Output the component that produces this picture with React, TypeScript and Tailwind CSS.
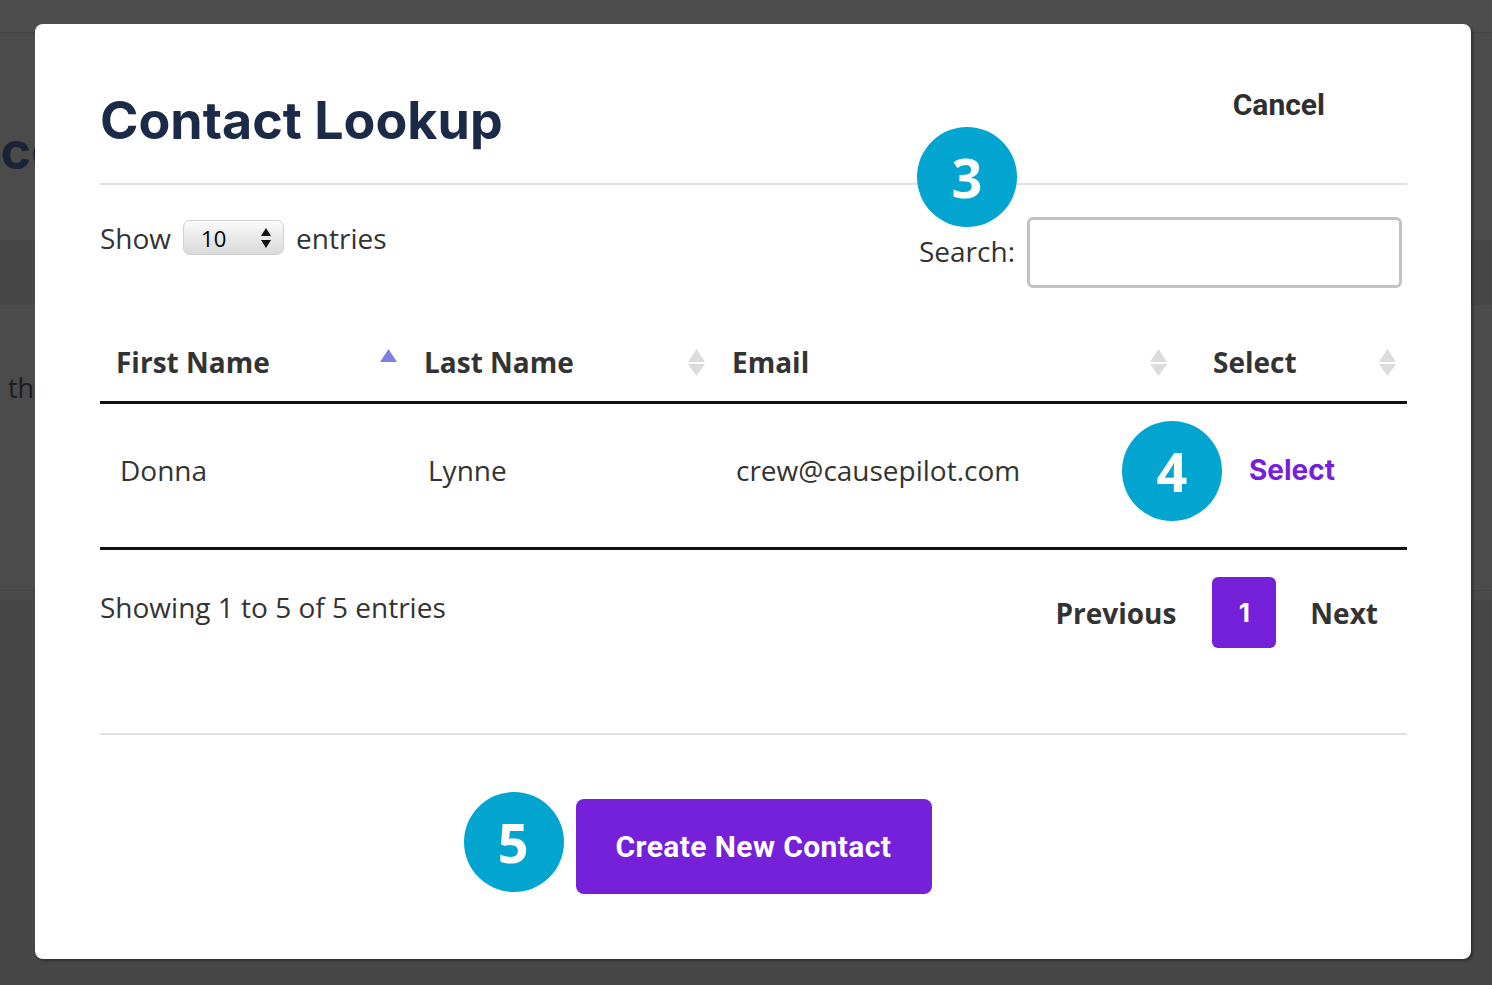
import { useState } from "react";

const columns = [
  { key: "first", label: "First Name", width: "w-[308px]", sort: "asc" },
  { key: "last", label: "Last Name", width: "w-[308px]", sort: "none" },
  { key: "email", label: "Email", width: "w-[462px]", sort: "none" },
  { key: "select", label: "Select", width: "w-[229px]", sort: "none" },
];

function SortIcon({ state }: { state: string }) {
  if (state === "asc") {
    return (
      <svg width="17" height="28" viewBox="0 0 17 28" className="shrink-0">
        <polygon points="8.5,0 17,13 0,13" fill="#8080e2" />
      </svg>
    );
  }
  return (
    <svg width="17" height="28" viewBox="0 0 17 28" className="shrink-0">
      <polygon points="8.5,0 17,13 0,13" fill="#dcdcdc" />
      <polygon points="0,15 17,15 8.5,27" fill="#dcdcdc" />
    </svg>
  );
}

function StepBadge({ n, className }: { n: number; className: string }) {
  return (
    <div
      className={`absolute w-[100px] h-[100px] rounded-full bg-[#02a5d0] flex items-center justify-center text-white text-[54px] font-bold leading-none ${className}`}
      style={{ fontFamily: "'Open Sans', sans-serif" }}
    >
      {n}
    </div>
  );
}

export default function App() {
  const [pageSize, setPageSize] = useState("10");
  const [query, setQuery] = useState("");

  return (
    <div
      className="relative w-full h-[985px] overflow-hidden bg-[#4b4b4b] text-[#333]"
      style={{ fontFamily: "'Open Sans', sans-serif" }}
    >
      {/* dimmed page behind the modal */}
      <div className="h-[33px] bg-[#4d4d4d] border-b border-[#444]" />
      <div className="h-[207px] pt-[92px]">
        <div className="-ml-[18px] text-[52px] font-bold leading-none text-[#1a2436]" style={{ fontFamily: "Inter, sans-serif" }}>
          tco
        </div>
      </div>
      <div className="h-[65px] bg-[#474747]" />
      <div className="h-[285px] pt-[63px] pl-[8px] text-[27px] text-[#1e1e1e]">th</div>
      <div className="h-[10px] border-t border-[#454545] bg-[#4a4a4a]" />
      <div className="h-[395px] bg-[#474747]" />

      {/* modal */}
      <div className="absolute left-[35px] top-[24px] w-[1436px] h-[935px] bg-white rounded-[8px] shadow-[2px_2px_3px_rgba(0,0,0,0.35)] pl-[65px] pr-[64px] flex flex-col">
        {/* header */}
        <div className="h-[161px] flex items-start justify-between border-b-2 border-[#dee2e6]">
          <h1
            className="mt-[71px] text-[52px] font-bold leading-none text-[#1b2a47]"
            style={{ fontFamily: "Inter, sans-serif" }}
          >
            Contact Lookup
          </h1>
          <button
            className="mt-[66px] mr-[82px] text-[30px] font-bold leading-none text-[#2f2f2f]"
            style={{ fontFamily: "Roboto, sans-serif" }}
          >
            Cancel
          </button>
        </div>

        {/* controls */}
        <div className="flex items-start justify-between pt-[32px]">
          <div className="mt-[3px] flex items-center gap-[12px] text-[28px] leading-none text-[#333]">
            <span>Show</span>
            <div className="relative w-[101px] h-[35px] rounded-[7px] border border-[#d0d0d0] bg-gradient-to-b from-[#fbfbfb] via-[#e9e9e9] to-[#dadada] shadow-[inset_0_1px_0_#fff]">
              <span className="absolute left-[17px] top-[6px] text-[22px] leading-none text-black">{pageSize}</span>
              <svg width="10" height="20" viewBox="0 0 10 20" className="absolute right-[12px] top-[7px]">
                <polygon points="5,0 10,8 0,8" fill="#111" />
                <polygon points="0,12 10,12 5,20" fill="#111" />
              </svg>
              <select
                value={pageSize}
                onChange={(e) => setPageSize(e.target.value)}
                className="absolute inset-0 opacity-0"
              >
                <option>10</option>
                <option>25</option>
                <option>50</option>
              </select>
            </div>
            <span>entries</span>
          </div>

          <div className="relative flex items-center gap-[12px] mr-[5px]">
            <StepBadge n={3} className="-left-[2px] -top-[90px]" />
            <span className="text-[28px] leading-none text-[#333] mt-[-4px]">Search:</span>
            <input
              value={query}
              onChange={(e) => setQuery(e.target.value)}
              className="w-[375px] h-[71px] rounded-[6px] border-[3px] border-[#c2c2c2] outline-none px-3 text-[24px]"
            />
          </div>
        </div>

        {/* table */}
        <div className="mt-[36px]">
          <div className="flex h-[80px] border-b-[3px] border-[#111]">
            {columns.map((c) => (
              <div key={c.key} className={`${c.width} flex items-center justify-between pr-[11px] ${c.key === "select" ? "pl-[35px]" : "pl-[16px]"}`}>
                <span className="text-[28px] font-bold leading-none text-[#333] -mt-[2px]">{c.label}</span>
                <SortIcon state={c.sort} />
              </div>
            ))}
          </div>
          <div className="flex h-[146px] items-center border-b-[3px] border-[#111] text-[28px] leading-none text-[#333] pb-[12px]">
            <div className="w-[308px] pl-[20px]">Donna</div>
            <div className="w-[308px] pl-[20px]">Lynne</div>
            <div className="w-[462px] pl-[20px]">crew@causepilot.com</div>
            <div className="w-[229px] pl-[71px]">
              <a
                href="#"
                className="relative text-[28px] font-bold text-[#7520d9]"
                style={{ fontFamily: "Inter, sans-serif" }}
              >
                <StepBadge n={4} className="right-[calc(100%+27px)] top-[-32px]" />
                Select
              </a>
            </div>
          </div>
        </div>

        {/* info + pagination */}
        <div className="flex items-start justify-between pt-[27px]">
          <span className="mt-[16px] text-[28px] leading-none text-[#333]">Showing 1 to 5 of 5 entries</span>
          <div className="flex items-center mr-[29px] text-[28px] font-bold leading-none text-[#333]">
            <button className="mr-[36px]">Previous</button>
            <button
              className="w-[64px] h-[71px] rounded-[6px] bg-[#7520d9] text-white text-[26px]"
              style={{ fontFamily: "Inter, sans-serif" }}
            >
              1
            </button>
            <button className="ml-[34px]">Next</button>
          </div>
        </div>

        <div className="mt-[85px] border-t-2 border-[#dee2e6]" />

        {/* footer */}
        <div className="flex justify-center pt-[64px]">
          <button
            className="relative w-[356px] h-[95px] rounded-[8px] bg-[#7520d9] text-white text-[30px] font-bold tracking-[0.4px]"
            style={{ fontFamily: "Roboto, sans-serif" }}
          >
            <StepBadge n={5} className="right-[calc(100%+12px)] top-[-7px]" />
            Create New Contact
          </button>
        </div>
      </div>
    </div>
  );
}
